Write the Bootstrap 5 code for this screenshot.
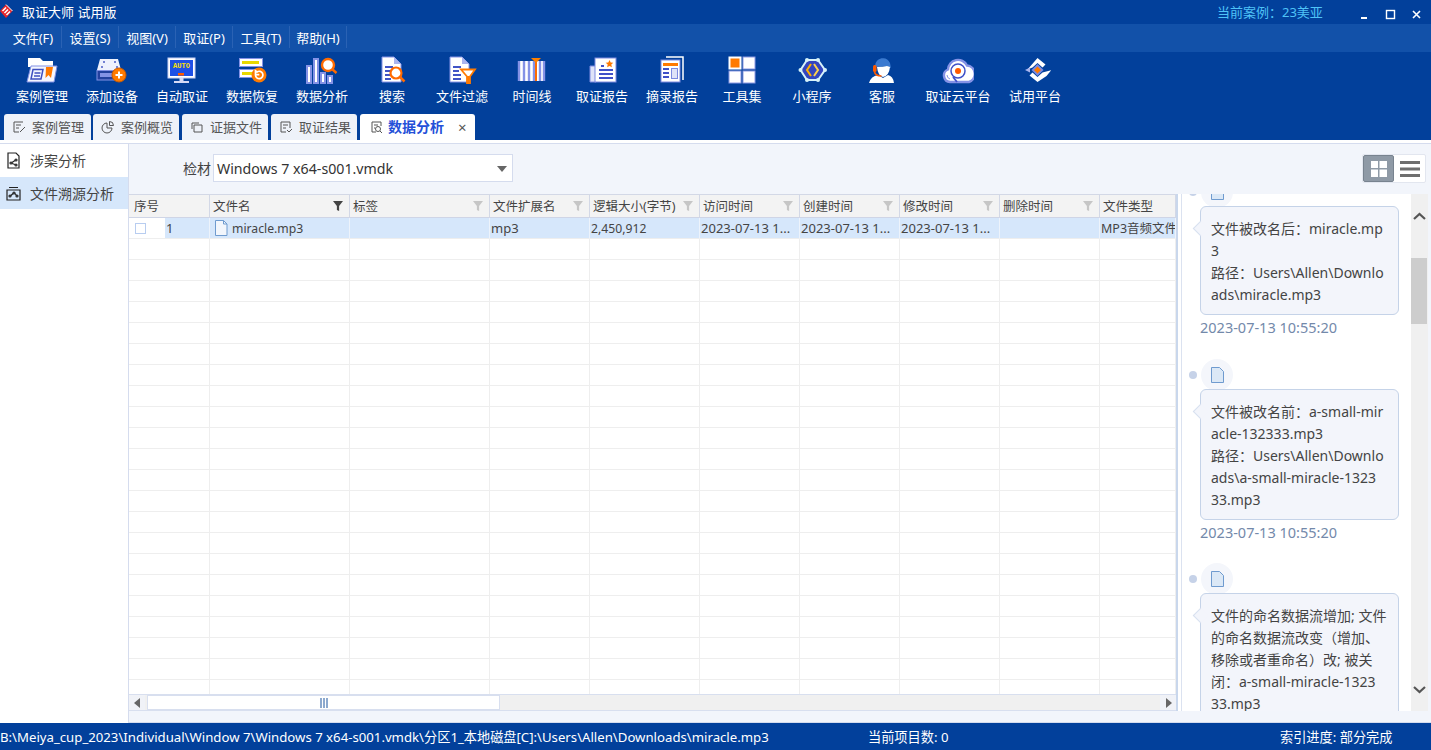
<!DOCTYPE html>
<html lang="zh"><head><meta charset="utf-8"><title>取证大师 试用版</title>
<link href="https://cdn.jsdelivr.net/npm/bootstrap@5.3.0/dist/css/bootstrap.min.css" rel="stylesheet">
<style>
html,body{height:100%;margin:0}
body{font-family:"Noto Sans","Noto Sans CJK SC",sans-serif;font-size:13px;color:#444;background:#f2f5fb;overflow:hidden}
.shell{height:750px}
.titlebar{height:24px;background:#02409b;color:#fff;line-height:24px;padding-left:22px;position:relative;flex:none}
.logo{position:absolute;left:0;top:2px}
.case-name{color:#4fc3f7;position:absolute;left:1217px;top:0;font-size:13px}
.winbtns{position:absolute;right:0;top:0;height:24px;width:70px}
.menubar{height:28px;background:#1251a9;color:#fff;padding-left:5px;flex:none}
.menuitem{width:57px;text-align:center;border-right:1px solid #2a62b4;height:22px;margin-top:2px;line-height:24px;font-size:13px;white-space:nowrap}
.toolbar{height:62px;background:#02409b;flex:none;padding-left:7px}
.toolitem{width:70px;color:#fff;text-align:center;font-size:13px;white-space:nowrap;padding-top:3px;flex:none}
.toolitem svg{display:block;margin:0 auto 2px}
.toolitem.w82{width:82px}
.toolitem.w72{width:72px}
.tabstrip{height:26px;background:#02409b;padding-left:4px;flex:none}
.tabitem{height:26px;background:#eef2f9;border-radius:3px 3px 0 0;width:86px;padding-left:8px;gap:6px;color:#555;white-space:nowrap;line-height:26px;font-size:13px;margin-left:3px}
.tabitem.first{width:87px;margin-left:0}
.tabitem.second{margin-left:2px}
.tabitem.on{background:#fff;width:115px;color:#2450d8;font-weight:700;padding-left:10px;gap:4px;font-size:14px}
.tabx{color:#555;font-weight:400;font-size:15px;margin-left:10px}
.gapline{height:4px;background:#fff;border-bottom:1px solid #d5dcee;flex:none}
.sidebar{width:129px;background:#fff;border-right:1px solid #d5dcee;flex:none;font-size:14px}
.sideitem{height:33px;padding-left:6px;gap:9px;line-height:33px;white-space:nowrap}
.sideitem.on{background:#d6e7fb;height:32px}
.filterbar{height:50px;background:#f2f5fb;position:relative;flex:none;padding-left:54px;padding-top:10px}
.pick-label{font-size:14px;margin-top:4px;width:30px}
.picker{width:300px;height:28px;background:#fff;border:1px solid #d5dcee;font-size:14.2px;padding-left:3px;line-height:27px;color:#333;position:relative}
.picker:after{content:"";position:absolute;right:5px;top:11px;border:5px solid transparent;border-top:6px solid #666;border-bottom:0}
.viewbtns{position:absolute;left:1233px;top:10px;width:64px;height:29px;background:#fff;border:1px solid #e2e6ef;border-radius:2px}
.viewbtn{width:32px;height:100%;display:flex;align-items:center;justify-content:center}
.viewbtn.on{background:#8f9aa6;border:1px solid #78838f;border-radius:2px}
.gridwrap{width:1047px;flex:none;background:#fff}
.gridview{height:500px;overflow:hidden;flex:none}
table.dgrid{table-layout:fixed;width:1047px;margin:0;border-collapse:separate;border-spacing:0;font-size:13px;color:#444}
.dgrid th{height:24px;background:#f3f3f3;font-weight:400;border-right:1px solid #d3d8e6;border-top:1px solid #d3d8e6;border-bottom:1px solid #cfd5e6;padding:1px 3px 0;white-space:nowrap;overflow:hidden;position:relative;font-size:12.5px;line-height:21px}
.dgrid th.seqhead{padding-left:5px}
.dgrid td{height:21px;padding:1px 0 0 1px;border-right:1px solid #eee;border-bottom:1px solid #eee;white-space:nowrap;overflow:hidden;background:#fff;line-height:19px}
.dgrid tr.sel td{background:#d6e7fb;border-right-color:#edf3fb;border-bottom-color:#eee}
.dgrid tr.sel td.chk{background:#fff;padding-left:6px;border-right:0}
.dgrid tr.sel td.fname{padding-left:4px;font-size:12.2px}
.dgrid tr.sel td.fsize{font-size:12.2px}
.dgrid tr.sel td.ftype{font-size:12.5px}
.dgrid td.chk{border-right:0}
.chkbox{display:block;width:11px;height:11px;border:1px solid #b8cdf0;background:#fff}
.flt{position:absolute;right:6px;top:6px}
.hscroll{height:17px;background:#f0f0f0;border:1px solid #d8dfef;border-width:1px 0;flex:none}
.sbtn{width:16px;flex:none;display:flex;align-items:center;justify-content:center;background:#f0f2f7}
.hthumb{width:353px;margin-left:2px;background:#fff;border:1px solid #d8dfef;display:flex;align-items:center;justify-content:center;flex:none}
.hgap{flex:1}
.splitter{width:6px;flex:none;background:#fff;border-left:2px solid #c9d7ec;border-right:1px solid #dbe2f0}
.timeline{width:229px;background:#fff;overflow:hidden;flex:none;height:517px}
.vscroll{width:17px;background:#f0f0f0;flex:none;height:517px;position:relative}
.vthumb{position:absolute;left:0;top:64px;width:16px;height:66px;background:#cdcdcd}
.varrow{position:absolute;left:2px}
.tlitem{padding-left:18px;width:217px}
.tlhead{height:28px;position:relative}
.dot{position:absolute;left:-11px;top:10px;width:8px;height:8px;border-radius:50%;background:#c6d2e8}
.disc{position:absolute;left:1px;top:-2px;width:32px;height:32px;border-radius:50%;background:#f4f6fb;display:flex;align-items:center;justify-content:center}
.bubble{width:199px;background:#f3f5fb;border:1px solid #c5d3e8;border-radius:6px;padding:11px 0 8px 10px;font-size:14px;line-height:22px;color:#444;white-space:nowrap;position:relative}
.bubble:before{content:"";position:absolute;left:-6px;top:16px;width:11px;height:11px;background:#f3f5fb;border-left:1px solid #d7e0ef;border-bottom:1px solid #d7e0ef;transform:rotate(45deg)}
.tldate{height:24px;line-height:25px;margin-bottom:21.5px;font-size:14.5px;color:#7389aa;white-space:nowrap}
.bottomgap{height:12px;background:#f2f5fb;border-bottom:1px solid #d5dcee;flex:none}
.statusbar{height:27px;background:#02409b;color:#fff;position:relative;line-height:28px;font-size:13.2px;flex:none;white-space:nowrap}
.statusbar span{position:absolute;top:0}
</style></head><body>
<div class="shell d-flex flex-column">
<div class="titlebar">
<svg class="logo" width="14" height="18" viewBox="0 0 14 18"><path d="M0 9 6 2.500 12.500 9 6 16Z" fill="#e8262a"/><path d="M2.500 9 6 5.500M4.500 11 8 7.500M6.500 13 10 9.500" stroke="#fff" stroke-width="1.500"/><path d="M6 2.500 12.500 9" stroke="#fff"/></svg>
取证大师 试用版
<span class="case-name">当前案例：23美亚</span>
<div class="winbtns"><svg width="70" height="24" viewBox="0 0 70 24"><path d="M0 15h6v2H0z" fill="#fff"/><rect x="25.500" y="8.500" width="8" height="8" fill="none" stroke="#fff" stroke-width="1.400"/><path d="M52 9l7 7M59 9l-7 7" stroke="#fff" stroke-width="1.600"/></svg></div>
</div>
<div class="menubar d-flex"><div class="menuitem">文件(F)</div><div class="menuitem">设置(S)</div><div class="menuitem">视图(V)</div><div class="menuitem">取证(P)</div><div class="menuitem">工具(T)</div><div class="menuitem">帮助(H)</div></div>
<div class="toolbar d-flex">
<div class="toolitem"><svg width="32" height="30" viewBox="0 0 32 30"><path d="M2 3h12l3 3h10v6H2z" fill="#fff"/><path d="M5 11h26l-3 16H1z" fill="#f4f6ff" stroke="#8090e4"/><path d="M7 14.500h10l-2 9.500H5zM8.500 18h6M8 21h6" fill="none" stroke="#3f4fc0" stroke-width="1.500"/><path d="M20 12h7l-2 11-2.500-3-3 3z" fill="#ff7a00"/></svg>案例管理</div>
<div class="toolitem"><svg width="32" height="30" viewBox="0 0 32 30"><path d="M4 4h18l3 11H1z" fill="#eef1fd"/><circle cx="8" cy="7" r="1" fill="#4b5bc4"/><circle cx="19" cy="7" r="1" fill="#4b5bc4"/><circle cx="6" cy="12" r="1" fill="#4b5bc4"/><circle cx="21" cy="12" r="1" fill="#4b5bc4"/><rect x="1" y="15.500" width="24" height="9.500" fill="#23409f" stroke="#8492e6"/><rect x="4" y="18" width="13" height="4" fill="#8492e6"/><circle cx="23" cy="20" r="7" fill="#ff7a00" stroke="#c95a00"/><path d="M19.500 20h7M23 16.500v7" stroke="#fff" stroke-width="2"/></svg>添加设备</div>
<div class="toolitem"><svg width="32" height="30" viewBox="0 0 32 30"><rect x="2" y="3" width="27" height="20" fill="#fff" stroke="#c8cff5"/><rect x="4" y="5" width="23" height="16" fill="#1e50e6"/><text x="15.500" y="13" font-size="7" font-weight="700" fill="#ffe100" text-anchor="middle" font-family="Liberation Mono,monospace">AUTO</text><rect x="12" y="18" width="6" height="2.500" fill="#ff5a00"/><path d="M13.500 23h4v3h-4zM8 26h15v2H8z" fill="#d5daf5"/></svg>自动取证</div>
<div class="toolitem"><svg width="32" height="30" viewBox="0 0 32 30"><rect x="3.500" y="3.500" width="23" height="8" fill="#fff" stroke="#8492e6"/><rect x="6" y="6" width="17" height="3" fill="#e8d800"/><rect x="3.500" y="14.500" width="18" height="8" fill="#fff" stroke="#8492e6"/><rect x="6" y="17" width="11" height="3" fill="#e8d800"/><circle cx="23" cy="20" r="7.500" fill="#ff7a00"/><path d="M19.500 20a3.700 3.700 0 1 0 1.500-3l-1.500-1.200v3.800h3.800" fill="none" stroke="#fff" stroke-width="1.700"/></svg>数据恢复</div>
<div class="toolitem"><svg width="32" height="30" viewBox="0 0 32 30"><rect x="1" y="11" width="4" height="17" fill="#fff" stroke="#8492e6" stroke-width="2"/><rect x="8" y="4" width="4" height="24" fill="#fff" stroke="#8492e6" stroke-width="2"/><rect x="15" y="18" width="4" height="10" fill="#fff" stroke="#8492e6" stroke-width="2"/><rect x="22" y="21" width="4" height="7" fill="#fff" stroke="#8492e6" stroke-width="2"/><circle cx="22" cy="10" r="6" fill="#fff" stroke="#ff6a00" stroke-width="2.400"/><path d="M26 14l4.500 4" stroke="#ff6a00" stroke-width="2.500"/></svg>数据分析</div>
<div class="toolitem"><svg width="32" height="30" viewBox="0 0 32 30"><path d="M6 2h12l7 7v18H6z" fill="#fff" stroke="#8492e6"/><path d="M18 2v7h7z" fill="#aab5ef"/><path d="M9 12h8M9 16h6M9 20h5M9 24h6" stroke="#4154c6" stroke-width="1.800"/><circle cx="20" cy="18" r="5.500" fill="#fff" stroke="#ff6a00" stroke-width="2.200"/><path d="M24 22l4.500 4.500" stroke="#ff6a00" stroke-width="2.500"/></svg>搜索</div>
<div class="toolitem"><svg width="32" height="30" viewBox="0 0 32 30"><path d="M4 2h12l7 7v18H4z" fill="#fff" stroke="#8492e6"/><path d="M16 2v7h7z" fill="#aab5ef"/><path d="M7 12h8M7 16h6M7 20h8M7 24h8" stroke="#4154c6" stroke-width="1.800"/><path d="M15 14.500h14l-5 7v6.500h-3v-6.500z" fill="#fff" stroke="#ff7a00" stroke-width="1.800"/><path d="M22.500 21v7.500" stroke="#ff7a00" stroke-width="2.500"/></svg>文件过滤</div>
<div class="toolitem"><svg width="32" height="30" viewBox="0 0 32 30"><rect x="2" y="6" width="26" height="20" fill="#fff"/><path d="M3 6v20M8 6v20M13 6v20M18 6v20M24 6v20M28 6v20" stroke="#8492e6" stroke-width="2.400"/><path d="M19 6h2v20h-2z" fill="#ff6a00"/><path d="M15 3h10l-5 5z" fill="#ff8000"/></svg>时间线</div>
<div class="toolitem"><svg width="32" height="30" viewBox="0 0 32 30"><path d="M4 11h6v16H4z" fill="#dfe3f8" stroke="#7c8ae0"/><rect x="9" y="3" width="21" height="24" fill="#fff" stroke="#7c8ae0"/><path d="M15 11h3M13 15h14M13 19h14M13 23h14" stroke="#3f50c8" stroke-width="2"/><path d="M23.500 5l1.200 2.500 2.600.3-2 1.800.6 2.600-2.400-1.300-2.400 1.300.6-2.600-2-1.800 2.600-.3z" fill="#ff7a00"/></svg>取证报告</div>
<div class="toolitem"><svg width="32" height="30" viewBox="0 0 32 30"><path d="M10 2h17v23" fill="none" stroke="#fff" stroke-width="1.500"/><rect x="5" y="5" width="19" height="22" fill="#fff" stroke="#7c8ae0"/><rect x="7" y="8" width="15" height="3" fill="#ff7a00"/><path d="M7 14h6M7 18h6M7 22h6" stroke="#3f50c8" stroke-width="2"/><rect x="15.500" y="13.500" width="6" height="10" fill="#dfe3f8" stroke="#7c8ae0"/></svg>摘录报告</div>
<div class="toolitem"><svg width="32" height="30" viewBox="0 0 32 30"><rect x="3.500" y="2.500" width="11" height="11" fill="#ff7a00" stroke="#fff" stroke-width="2"/><rect x="17" y="2" width="12" height="12" fill="#fff" stroke="#8c99e4"/><rect x="3" y="16" width="12" height="12" fill="#fff" stroke="#8c99e4"/><rect x="17" y="16" width="12" height="12" fill="#fff" stroke="#8c99e4"/></svg>工具集</div>
<div class="toolitem"><svg width="32" height="30" viewBox="0 0 32 30"><path d="M11 5h11l7 10-7 10H11L4.500 15z" fill="#3445bf" stroke="#d6f2fa" stroke-width="2"/><g fill="#d6f2fa"><circle cx="11" cy="5" r="2"/><circle cx="22" cy="5" r="2"/><circle cx="29" cy="15" r="2"/><circle cx="22" cy="25" r="2"/><circle cx="11" cy="25" r="2"/><circle cx="4.500" cy="15" r="2"/></g><path d="M15 9l-4 6 4 6" fill="none" stroke="#ffb000" stroke-width="2"/><path d="M18 9l4 6-4 6" fill="none" stroke="#ffd24a" stroke-width="2"/></svg>小程序</div>
<div class="toolitem"><svg width="32" height="30" viewBox="0 0 32 30"><path d="M9 11a8 9 0 0 1 15-3l1 5-5-2q-6 1-9 1z" fill="#3b7ad0"/><path d="M11 12q6 0 10-1l3 1q-1 9-7 10-5-1-6-10z" fill="#fff"/><path d="M3 28q2-7 9-8l5 3 5-3q5 1 6 8z" fill="#fff"/><rect x="7" y="10" width="3.500" height="7" rx="1.500" fill="#ff5a00"/><path d="M8.500 17q1 4 7 4" fill="none" stroke="#ff5a00" stroke-width="1.600"/></svg>客服</div>
<div class="toolitem w82"><svg width="32" height="30" viewBox="0 0 32 30"><path d="M8 27a6.500 6.500 0 0 1-2-12.500 10 10 0 0 1 19-4 8.500 8.500 0 0 1 2 16.500z" fill="#fff" stroke="#8492e6" stroke-width="2.400"/><path d="M8 24q-3-1-3-4" fill="none" stroke="#8492e6"/><circle cx="16" cy="16" r="7" fill="#fff" stroke="#3f50c8" stroke-width="1.500"/><circle cx="16" cy="16" r="3" fill="#ff5a00"/><path d="M11 22l4 5" stroke="#3f50c8" stroke-width="1.800"/></svg>取证云平台</div>
<div class="toolitem w72"><svg width="32" height="30" viewBox="0 0 32 30"><path d="M18.500 3l8 6.500-3 3-5-4.500-5 4.500-5 2z" fill="#fff"/><path d="M18.500 27l-8-6.500 3-3 5 4.500 5-4.500 9-2.500-5 6z" fill="#fff"/><path d="M6 15l5-2.500v5z" fill="#aab5ef"/><path d="M18.500 9l6 6-6 6-6-6z" fill="#7c8ae0"/><path d="M18.500 11.500l3.500 3.500-3.500 3.500-3.500-3.500z" fill="#ff7a00"/></svg>试用平台</div>
</div>
<div class="tabstrip d-flex">
<div class="tabitem first d-flex"><svg class="align-self-center" width="14" height="14" viewBox="0 0 14 14" fill="none" stroke="#555"><path d="M11 2H2v10h5M4 5h5M4 8h3M8 12l5-5"/></svg>案例管理</div>
<div class="tabitem second d-flex"><svg class="align-self-center" width="14" height="14" viewBox="0 0 14 14" fill="none" stroke="#555"><path d="M6 3a5 5 0 1 0 5 5H6zM8.500 1.500a4 4 0 0 1 4 4h-4z"/></svg>案例概览</div>
<div class="tabitem d-flex"><svg class="align-self-center" width="14" height="14" viewBox="0 0 14 14" fill="none" stroke="#555"><path d="M2 9V3h7M4 5h8v7H4z"/></svg>证据文件</div>
<div class="tabitem d-flex"><svg class="align-self-center" width="14" height="14" viewBox="0 0 14 14" fill="none" stroke="#555"><path d="M7 12H2V2h9v6M4 5h5M4 8h3M8 10l2 2 3-3"/></svg>取证结果</div>
<div class="tabitem on d-flex"><svg class="align-self-center" width="14" height="14" viewBox="0 0 14 14" fill="none" stroke="#555"><path d="M6 12H2V2h9v4M4 5h4M4 8h1"/><circle cx="8" cy="9" r="2.500"/><path d="M10 11l2 2"/></svg>数据分析<span class="tabx">×</span></div>
</div>
<div class="gapline"></div>
<div class="d-flex flex-grow-1" style="min-height:0">
<div class="sidebar">
<div class="sideitem d-flex"><svg class="align-self-center" width="15" height="17" viewBox="0 0 15 17" fill="none" stroke="#222" stroke-width="1.200"><path d="M2 1h8l3 3v12H2z"/><circle cx="5" cy="11" r="1"/><circle cx="10" cy="8" r="1"/><circle cx="10" cy="13" r="1"/><path d="M6 10.500l3-2M6 11.500l3 1"/></svg>涉案分析</div>
<div class="sideitem on d-flex"><svg class="align-self-center" width="15" height="15" viewBox="0 0 15 15" fill="none" stroke="#222" stroke-width="1.200"><path d="M1 4h13v10H1zM3 1.500h9"/><circle cx="4" cy="10" r="1"/><circle cx="8" cy="7" r="1"/><circle cx="11" cy="10" r="1"/><path d="M5 9.500l2-2M9 7.500l1.500 2"/></svg>文件溯源分析</div>
</div>
<div class="flex-grow-1 d-flex flex-column" style="min-width:0">
<div class="filterbar d-flex"><div class="pick-label">检材</div><div class="picker">Windows 7 x64-s001.vmdk</div>
<div class="viewbtns d-flex"><div class="viewbtn on"><svg width="16" height="16" viewBox="0 0 16 16" fill="#fff"><rect width="7" height="7"/><rect x="8.500" width="7.500" height="7"/><rect y="8.500" width="7" height="7.500"/><rect x="8.500" y="8.500" width="7.500" height="7.500"/></svg></div><div class="viewbtn"><svg width="20" height="16" viewBox="0 0 20 16" fill="#6e6e6e"><rect width="20" height="3"/><rect y="6.500" width="20" height="3"/><rect y="13" width="20" height="3"/></svg></div></div>
</div>
<div class="d-flex" style="height:517px">
<div class="gridwrap d-flex flex-column">
<div class="gridview"><table class="dgrid" id="grid"><colgroup><col style="width:36px"><col style="width:45px"><col style="width:140px"><col style="width:140px"><col style="width:100px"><col style="width:110px"><col style="width:100px"><col style="width:100px"><col style="width:100px"><col style="width:100px"><col style="width:76px"></colgroup>
<thead><tr><th colspan="2" class="seqhead">序号</th><th>文件名<svg class="flt" width="10" height="10" viewBox="0 0 9 9"><path d="M0 0h9L5.500 4.500V9L3.500 8V4.500z" fill="#444"/></svg></th><th>标签<svg class="flt" width="10" height="10" viewBox="0 0 9 9"><path d="M0 0h9L5.500 4.500V9L3.500 8V4.500z" fill="#c6c6c6"/></svg></th><th>文件扩展名<svg class="flt" width="10" height="10" viewBox="0 0 9 9"><path d="M0 0h9L5.500 4.500V9L3.500 8V4.500z" fill="#c6c6c6"/></svg></th><th>逻辑大小(字节)<svg class="flt" width="10" height="10" viewBox="0 0 9 9"><path d="M0 0h9L5.500 4.500V9L3.500 8V4.500z" fill="#c6c6c6"/></svg></th><th>访问时间<svg class="flt" width="10" height="10" viewBox="0 0 9 9"><path d="M0 0h9L5.500 4.500V9L3.500 8V4.500z" fill="#c6c6c6"/></svg></th><th>创建时间<svg class="flt" width="10" height="10" viewBox="0 0 9 9"><path d="M0 0h9L5.500 4.500V9L3.500 8V4.500z" fill="#c6c6c6"/></svg></th><th>修改时间<svg class="flt" width="10" height="10" viewBox="0 0 9 9"><path d="M0 0h9L5.500 4.500V9L3.500 8V4.500z" fill="#c6c6c6"/></svg></th><th>删除时间<svg class="flt" width="10" height="10" viewBox="0 0 9 9"><path d="M0 0h9L5.500 4.500V9L3.500 8V4.500z" fill="#c6c6c6"/></svg></th><th>文件类型</th></tr></thead>
<tbody><tr class="sel"><td class="chk"><span class="chkbox"></span></td><td>1</td><td class="fname"><svg class="me-1" style="vertical-align:-3px" width="14" height="16" viewBox="0 0 14 16"><path d="M1.500.500h8l3.500 3.500v11.500H1.500z" fill="#f2f6fc" stroke="#6f9bcf"/><path d="M9.500.500V4H13" fill="none" stroke="#6f9bcf"/></svg>miracle.mp3</td><td></td><td>mp3</td><td class="fsize">2,450,912</td><td>2023-07-13 1...</td><td>2023-07-13 1...</td><td>2023-07-13 1...</td><td></td><td class="ftype">MP3音频文件</td></tr></tbody></table></div>
<div class="hscroll d-flex"><div class="sbtn"><svg width="7" height="10" viewBox="0 0 7 10"><path d="M6 0v10L0 5z" fill="#666"/></svg></div><div class="hthumb"><svg width="8" height="10" viewBox="0 0 8 10" stroke="#1b559f"><path d="M1 0v10M4 0v10M7 0v10"/></svg></div><div class="hgap"></div><div class="sbtn"><svg width="7" height="10" viewBox="0 0 7 10"><path d="M1 0v10L7 5z" fill="#666"/></svg></div></div>
</div>
<div class="splitter"></div>
<div class="timeline"><div style="margin-top:-16px">
<div class="tlitem"><div class="tlhead"><i class="dot"></i><div class="disc"><svg width="13" height="16" viewBox="0 0 13 16"><path d="M.5.500h8l4 4v11H.5z" fill="#dbe8f6" stroke="#6f9bcf"/></svg></div></div><div class="bubble">文件被改名后：miracle.mp<br>3<br>路径：Users\Allen\Downlo<br>ads\miracle.mp3</div><div class="tldate">2023-07-13 10:55:20</div></div>
<div class="tlitem"><div class="tlhead"><i class="dot"></i><div class="disc"><svg width="13" height="16" viewBox="0 0 13 16"><path d="M.5.500h8l4 4v11H.5z" fill="#dbe8f6" stroke="#6f9bcf"/></svg></div></div><div class="bubble">文件被改名前：a-small-mir<br>acle-132333.mp3<br>路径：Users\Allen\Downlo<br>ads\a-small-miracle-1323<br>33.mp3</div><div class="tldate">2023-07-13 10:55:20</div></div>
<div class="tlitem"><div class="tlhead"><i class="dot"></i><div class="disc"><svg width="13" height="16" viewBox="0 0 13 16"><path d="M.5.500h8l4 4v11H.5z" fill="#dbe8f6" stroke="#6f9bcf"/></svg></div></div><div class="bubble">文件的命名数据流增加; 文件<br>的命名数据流改变（增加、<br>移除或者重命名）改; 被关<br>闭：a-small-miracle-1323<br>33.mp3</div></div>
</div></div>
<div class="vscroll"><svg class="varrow" style="top:18px" width="13" height="9" viewBox="0 0 13 9"><path d="M1 7l5.500-5L12 7" fill="none" stroke="#555" stroke-width="2.200"/></svg><div class="vthumb"></div><svg class="varrow" style="top:491px" width="13" height="9" viewBox="0 0 13 9"><path d="M1 2l5.500 5L12 2" fill="none" stroke="#555" stroke-width="2.200"/></svg></div>
</div>
<div class="bottomgap"></div>
</div>
</div>
<div class="statusbar"><span style="left:0">B:\Meiya_cup_2023\Individual\Window 7\Windows 7 x64-s001.vmdk\分区1_本地磁盘[C]:\Users\Allen\Downloads\miracle.mp3</span><span style="left:868px">当前项目数: 0</span><span style="left:1280px">索引进度: 部分完成</span></div>
</div>
<script>
var tb=document.querySelector('#grid tbody');
for(var i=0;i<23;i++){var r=tb.insertRow();for(var c=0;c<11;c++){var d=r.insertCell();if(c==0)d.className='chk';}}
</script>
<script src="https://cdn.jsdelivr.net/npm/bootstrap@5.3.0/dist/js/bootstrap.bundle.min.js"></script>
</body></html>
